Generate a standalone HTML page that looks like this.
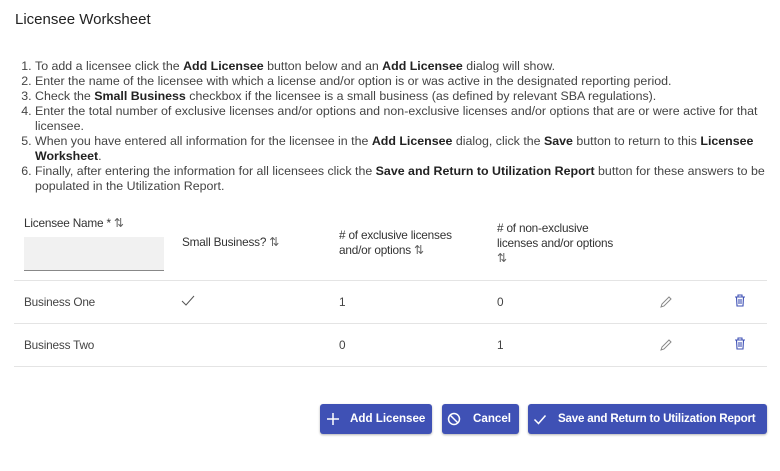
<!DOCTYPE html>
<html><head><style>
body{margin:0;width:780px;height:471px;background:#fff;font-family:"Liberation Sans",sans-serif;color:#333;position:relative;overflow:hidden}
.a{position:absolute;white-space:nowrap}
h1{position:absolute;left:15px;top:11px;margin:0;font-size:15px;font-weight:normal;color:#222}
ol{position:absolute;left:24px;top:59px;margin:0;padding-left:11px;font-size:12.4px;line-height:15px;color:#444;width:730px;letter-spacing:0}
b{color:#222}
.h{font-size:11.8px;color:#333;line-height:15px;letter-spacing:-0.2px}
.c{font-size:11.8px;color:#444;letter-spacing:-0.2px}
.ln{position:absolute;left:14px;width:753px;height:1px;background:#e4e4e4}
.btn{position:absolute;top:404px;height:30px;background:#3f51b5;border-radius:3px;color:#fff;font-weight:bold;font-size:11.6px;line-height:30px;box-shadow:0 1px 2px rgba(0,0,0,.3)}
.btn svg{position:absolute;top:8px}
.btn span{position:absolute;white-space:nowrap}
.s{color:#666}
</style></head><body>
<h1>Licensee Worksheet</h1>
<ol>
<li>To add a licensee click the <b>Add Licensee</b> button below and an <b>Add Licensee</b> dialog will show.</li>
<li>Enter the name of the licensee with which a license and/or option is or was active in the designated reporting period.</li>
<li>Check the <b>Small Business</b> checkbox if the licensee is a small business (as defined by relevant SBA regulations).</li>
<li>Enter the total number of exclusive licenses and/or options and non-exclusive licenses and/or options that are or were active for that licensee.</li>
<li>When you have entered all information for the licensee in the <b>Add Licensee</b> dialog, click the <b>Save</b> button to return to this <b>Licensee Worksheet</b>.</li>
<li>Finally, after entering the information for all licensees click the <b>Save and Return to Utilization Report</b> button for these answers to be populated in the Utilization Report.</li>
</ol>
<div class="a h" style="left:24px;top:216px">Licensee Name * <span class="s">⇅</span></div>
<div class="a" style="left:24px;top:237px;width:140px;height:33px;background:#f1f1f1;border-bottom:1px solid #888"></div>
<div class="a h" style="left:182px;top:235px">Small Business? <span class="s">⇅</span></div>
<div class="a h" style="left:339px;top:228px">#&nbsp;of exclusive licenses<br>and/or options <span class="s">⇅</span></div>
<div class="a h" style="left:497px;top:221px"># of non-exclusive<br>licenses and/or options<br><span class="s">⇅</span></div>
<div class="ln" style="top:280px"></div>
<div class="ln" style="top:323px"></div>
<div class="ln" style="top:366px"></div>
<div class="a c" style="left:24px;top:295px">Business One</div>
<svg class="a" style="left:181px;top:295px" width="14" height="11" viewBox="0 0 14 11"><path d="M1 6l4 4 8-9" fill="none" stroke="#555" stroke-width="1"/></svg>
<div class="a c" style="left:339px;top:295px">1</div>
<div class="a c" style="left:497px;top:295px">0</div>
<div class="a c" style="left:24px;top:338px">Business Two</div>
<div class="a c" style="left:339px;top:338px">0</div>
<div class="a c" style="left:497px;top:338px">1</div>
<svg class="a" style="left:659px;top:295px" width="14" height="14" viewBox="0 0 14 14"><path d="M2 12l1-3 7-7 2 2-7 7z" fill="none" stroke="#888" stroke-width="1"/></svg>
<svg class="a" style="left:659px;top:338px" width="14" height="14" viewBox="0 0 14 14"><path d="M2 12l1-3 7-7 2 2-7 7z" fill="none" stroke="#888" stroke-width="1"/></svg>
<svg class="a" style="left:734px;top:294px" width="12" height="13" viewBox="0 0 12 13"><path d="M1 3h10M4 3V1h4v2M2.5 3l.5 9h6l.5-9M5 5v5M7 5v5" fill="none" stroke="#3f51b5" stroke-width="1.1"/></svg>
<svg class="a" style="left:734px;top:337px" width="12" height="13" viewBox="0 0 12 13"><path d="M1 3h10M4 3V1h4v2M2.5 3l.5 9h6l.5-9M5 5v5M7 5v5" fill="none" stroke="#3f51b5" stroke-width="1.1"/></svg>
<div class="btn" style="left:320px;width:112px"><svg style="left:6px" width="14" height="14" viewBox="0 0 14 14"><path d="M7 1v12M1 7h12" stroke="#fff" stroke-width="1.5"/></svg><span style="left:30px">Add Licensee</span></div>
<div class="btn" style="left:442px;width:77px"><svg style="left:5px" width="14" height="14" viewBox="0 0 14 14"><circle cx="7" cy="7" r="5.5" fill="none" stroke="#fff" stroke-width="1.5"/><path d="M3 3l8 8" stroke="#fff" stroke-width="1.5"/></svg><span style="left:31px">Cancel</span></div>
<div class="btn" style="left:528px;width:239px"><svg style="left:5px" width="14" height="14" viewBox="0 0 14 14"><path d="M1.5 7.5l4 4 7-8" fill="none" stroke="#fff" stroke-width="1.5"/></svg><span style="left:30px;letter-spacing:-0.2px">Save and Return to Utilization Report</span></div>
</body></html>
